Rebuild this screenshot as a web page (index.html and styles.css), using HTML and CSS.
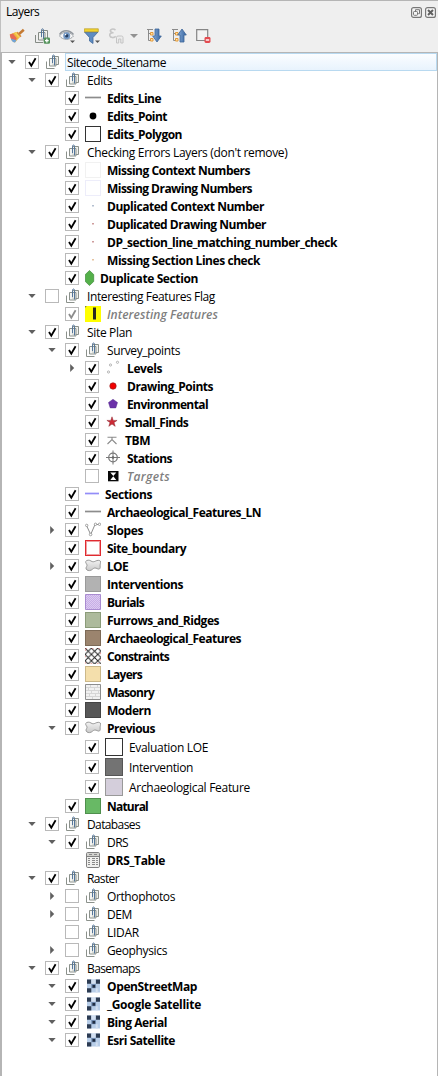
FILE: index.html
```html
<!DOCTYPE html>
<html lang="en">
<head>
<meta charset="utf-8">
<title>Layers</title>
<link rel="stylesheet" href="styles.css">
</head>
<body>
<svg class="defs" width="0" height="0" aria-hidden="true">
  <defs>
    <linearGradient id="gBlob" x2="0" y2="1"><stop offset="0" stop-color="#f2f2f2"/><stop offset="1" stop-color="#c9c9c9"/></linearGradient>
    <linearGradient id="gArrow" x2="1"><stop offset="0" stop-color="#84a9d6"/><stop offset="1" stop-color="#34639f"/></linearGradient>
    <pattern id="pDots" width="2" height="2" patternUnits="userSpaceOnUse"><rect width="2" height="2" fill="#dccaf1"/><path d="M0 0h1v1H0zM1 1h1v1H1z" fill="#c7aee6"/></pattern>
    <pattern id="pCross" width="6.400" height="6.400" patternUnits="userSpaceOnUse"><path d="M-1-1l8.400 8.400M-1 7.400L7.400-1" stroke="#222" stroke-width=".95"/></pattern>
  </defs>
  <symbol id="group" viewBox="0 0 16 16">
    <path d="M1.500 7.500v7H9.500" fill="none" stroke="#8b918b"/>
    <path d="M7.500 2.500h6v8h-6z" fill="#f0f1ed" stroke="#8b918b"/>
    <path d="M4.500 4.500h6.500v7.500H4.500z" fill="#f0f1ed" fill-opacity=".7" stroke="#8b918b"/>
    <path d="M7.500 9V2.500q0-1.500 1-1.500t1 1.500v9" fill="none" stroke="#55769a"/>
  </symbol>
  <symbol id="line" viewBox="0 0 16 16"><path d="M0 7.500h16" stroke="#8c8c8c" stroke-width="1.700"/></symbol>
  <symbol id="violet" viewBox="0 0 16 16"><path d="M0 7.500h14" stroke="#938df8" stroke-width="1.700"/></symbol>
  <symbol id="point" viewBox="0 0 16 16"><circle cx="8" cy="8" r="3.400" fill="#000"/></symbol>
  <symbol id="dotb" viewBox="0 0 16 16"><path d="M7 7h2v1.500H7z" fill="#b3bfd0"/></symbol>
  <symbol id="dotr" viewBox="0 0 16 16"><path d="M7 7h2v1.500H7z" fill="#cf9d9d"/></symbol>
  <symbol id="doto" viewBox="0 0 16 16"><path d="M7 7h2v1.500H7z" fill="#e5c3a0"/></symbol>
  <symbol id="hex" viewBox="0 0 16 16"><path d="M4.500.5L8.700 4.500v7L4.500 15.500.3 11.500v-7z" fill="#54b04a" stroke="#3f8b39" stroke-width=".7"/></symbol>
  <symbol id="flag" viewBox="0 0 16 16"><path d="M0 0h16v16H0z" fill="#ff0"/><path d="M0 1.200L1.500 0" stroke="#555"/><path d="M8 1.500h3v12H8z" fill="#2a2a22"/></symbol>
  <symbol id="levels" viewBox="0 0 16 16"><g fill="#fff" stroke="#999" stroke-width=".7"><circle cx="3.500" cy="12" r="1.100"/><circle cx="5.500" cy="5" r="1.100"/><circle cx="12.500" cy="2.300" r="1.100"/></g></symbol>
  <symbol id="red" viewBox="0 0 16 16"><circle cx="8" cy="8" r="3.200" fill="#f20000" stroke="#9a2020" stroke-width=".7"/></symbol>
  <symbol id="penta" viewBox="0 0 16 16"><path d="M8 3.300l4.500 3.200-1.700 5.400H5.200L3.500 6.500z" fill="#6b31a8" stroke="#57308e" stroke-width=".5"/></symbol>
  <symbol id="star" viewBox="0 0 16 16"><path d="M7 2.800l1.200 3.600h3.900L9 8.600l1.200 3.700L7 10.100l-3.200 2.200L5 8.600 1.900 6.400h3.900z" fill="#cc2b36" stroke="#8d2731" stroke-width=".5"/></symbol>
  <symbol id="tbm" viewBox="0 0 16 16"><path d="M2.500 5.300h9M2.500 12L7 7.500l4.500 4.500M7 5.500v2.500" fill="none" stroke="#8a8a8a" stroke-width="1.100"/></symbol>
  <symbol id="station" viewBox="0 0 16 16"><path d="M1 7.500h14M8 .5v14" stroke="#777"/><circle cx="8" cy="7.500" r="4.300" fill="none" stroke="#777" stroke-width="1.200"/><circle cx="8" cy="7.500" r="1.300" fill="#666"/></symbol>
  <symbol id="target" viewBox="0 0 16 16"><path d="M3 3h10.500v10.300H3z" fill="#080808"/><path d="M5.300 4.500h6L8.300 8zM5.300 12h6L8.300 8.300z" fill="#fff"/></symbol>
  <symbol id="slopes" viewBox="0 0 16 16"><path d="M1.500 3.500L5.700 12.500 10 2.500h4.500" fill="none" stroke="#8d8d8d"/><g fill="#fff" stroke="#8d8d8d" stroke-width=".8"><circle cx="1.700" cy="3.400" r="1.200"/><circle cx="5.600" cy="12.500" r="1.300"/><circle cx="10.500" cy="2.300" r="1.200"/><circle cx="14.500" cy="2.300" r="1.200"/></g></symbol>
  <symbol id="blob" viewBox="0 0 16 16"><path d="M.7 3.500C1.800 1.700 4.500 1.900 6 3c1.700 1.100 2.800.9 4.300.2C12.500 2.100 14.300 2 15.300 3c.7 2-.4 3.300-.2 5 .2 1.500.1 2.300-.7 3-1.500.6-2.800-1.200-4.600-1-2 .2-2.600 2.400-5.200 2.600C2.500 12.800.8 11.500 1 10c.2-1.200 1.200-1.800 1-3C1.800 5.700.4 5.200.7 3.500z" fill="url(#gBlob)" stroke="#8e8e8e" stroke-width=".9"/></symbol>
  <symbol id="hatch" viewBox="0 0 16 16"><path d="M0 0h16v16H0z" fill="#fff"/><path d="M0 0h16v16H0z" fill="url(#pCross)"/><path d="M.5.5h15v15H.5z" fill="none" stroke="#e08080" stroke-width=".7" stroke-dasharray="1.500 4.900"/></symbol>
  <symbol id="brick" viewBox="0 0 16 16"><path d="M.5.500h15v15H.5z" fill="#f1f1f1" stroke="#8d8d8d"/><path d="M1 3.500h14M1 6.500h14M1 9.500h14M1 12.500h14M5.500 1v2M12.500 1v2M3.500 4v2M9.500 4v2M6.500 7v2M13.500 7v2M4.500 10v2M10.500 10v2M7.500 13v2" stroke="#d6d6d6" fill="none"/></symbol>
  <symbol id="burial" viewBox="0 0 16 16"><path d="M.5.5h15v15H.5z" fill="url(#pDots)" stroke="#a98bd0"/></symbol>
  <symbol id="table" viewBox="0 0 16 16"><rect x="1.500" y=".5" width="13" height="15" rx="1.300" fill="#f0f0ee" stroke="#808080"/><path d="M2 1h12v3H2z" fill="#d2d2ce"/><path d="M2 4.500h12" stroke="#808080"/><path d="M3 6.500h2m2 0h3m1 0h2M3 8.500h2m2 0h3m1 0h2M3 10.500h2m2 0h3m1 0h2M3 12.500h2m2 0h3m1 0h2M4 2.500h3m2 0h3" stroke="#8a8a8a"/></symbol>
  <symbol id="raster" viewBox="0 0 16 16"><path d="M2 1.500h13v13H2z" fill="#b7cde8"/><path d="M2 1.500h4.300v4.300H2zM10.700 1.500H15v4.300h-4.300zM2 10.200h4.300v4.300H2z" fill="#2c3b52"/><path d="M6.300 5.800h4.400v4.400H6.300z" fill="#6d88ae"/><path d="M7.500 7h2.700v2.700H7.500z" fill="#202d42"/><path d="M6.300 1.500h4.400v4.300H6.300zM10.700 10.200h2v4.300h-2z" fill="#d3e0f1"/></symbol>
</svg>

<main class="panel">
  <header class="title">
    <h1 class="title-text">Layers</h1>
    <svg class="title-btn" viewBox="0 0 11 11"><rect x=".6" y=".6" width="9.800" height="9.800" rx="2" fill="#f6f6f6" stroke="#777" stroke-width="1.200"/><path d="M4.500 4V2.700h4v4H7.200" fill="none" stroke="#777"/><rect x="2.500" y="4.500" width="4" height="3.800" rx=".8" fill="none" stroke="#777"/></svg>
    <svg class="title-btn" viewBox="0 0 11 11"><rect x=".6" y=".6" width="9.800" height="9.800" rx="2" fill="#f6f6f6" stroke="#777" stroke-width="1.200"/><path d="M3 3l5 5M8 3L3 8" stroke="#606060" stroke-width="2"/></svg>
  </header>
  <nav class="toolbar">
    <svg class="tool" viewBox="0 0 16 16"><path d="M.8 6.500l6-2.500 4.200 5-5 5.500C3.500 14 1.500 12 .8 6.500z" fill="#f0b63d"/><path d="M.8 6.500L4 5.500l3.800 5L6 13C3.500 13 1.500 11 .8 6.500z" fill="#e66a55"/><path d="M1.800 10.500l5.700 1.700-1.500 2.300c-2 0-3.300-1.200-4.200-4z" fill="#6fa3d8"/><path d="M5.500 5l3-1.200 3.500 4-2.500 2z" fill="#f4d457"/><path d="M9.500 6.500l5.300-4.700" stroke="#c47a32" stroke-width="2.600"/><path d="M8 4.200l4 4.600" stroke="#d98a3d" stroke-width="1.400"/></svg>
    <svg class="tool" viewBox="0 0 16 16"><path d="M1.500 7v7.500H9" fill="none" stroke="#858b85"/><path d="M7.500 2.500h6v8h-6z" fill="#f4f5f1" stroke="#858b85"/><path d="M4.500 4.500h6.500V12H4.500z" fill="#f4f5f1" fill-opacity=".7" stroke="#858b85"/><path d="M7.500 9V2.500q0-1.700 1-1.700t1 1.700V11" fill="none" stroke="#55769a"/><rect x="9.700" y="9.500" width="6.300" height="6.300" rx="1.300" fill="#55935c"/><path d="M12.850 10.800v3.700M11 12.650h3.700" stroke="#fff" stroke-width="1.300"/></svg>
    <svg class="tool" viewBox="0 0 16 16"><path d="M.5 8C3 3.500 10 2.700 14.500 8 11 12.500 4 12.500.5 8z" fill="#f7f7f7" stroke="#a1a6ab"/><path d="M.5 6.500C3.500 1.500 10.500 1.500 14.500 6.500" fill="none" stroke="#90969c" stroke-width="1.300"/><circle cx="7.700" cy="7.800" r="3.500" fill="#7499c5"/><circle cx="7.700" cy="7.700" r="1.700" fill="#283f61"/><circle cx="6.600" cy="6.600" r=".8" fill="#fff"/><path d="M11 12.500h5L13.500 15z" fill="#555"/></svg>
    <svg class="tool" viewBox="0 0 16 16"><path d="M.5 4h13.500L9 9.500v6L5.500 13V9.500z" fill="#5e8cc2" stroke="#41699c" stroke-width=".8"/><path d="M.3.800h14v3H.3z" fill="#f1d32e" stroke="#b79b22" stroke-width=".7"/><path d="M11 12.500h5L13.500 15z" fill="#555"/></svg>
    <svg class="tool" viewBox="0 0 16 16"><path d="M6.500 2C4 .2.900 1.300 1.500 3.300 1.800 4.500 3 4.800 4.500 4.700 2 4.500.5 5.800.8 7.500c.6 2.700 4.200 2.500 6 .9" fill="none" stroke="#c6c6c6" stroke-width="1.600"/><path d="M7.500 15V9.500q0-1.500 1.500-1.500h3.500Q14 8 14 9.500V15h-2.200v-4H9.700v4z" fill="#ececec" stroke="#c4c4c4"/></svg>
    <svg class="tool-caret" viewBox="0 0 8 4"><path d="M0 0h8L4 4z" fill="#929292"/></svg>
    <svg class="tool" viewBox="0 0 16 16"><path d="M2.500 2v10.500H4M2.500 5.500H4M1 1.500h6" fill="none" stroke="#8a8a8a"/><path d="M4.500 4.500h2.500v2.500H4.500zM4.500 10.500h2.500V13H4.500z" fill="#ffe2ad" stroke="#e39a39"/><path d="M9 1h4v7h2.300L11 14 6.700 8H9z" fill="url(#gArrow)" stroke="#3d6498" stroke-width=".8"/></svg>
    <svg class="tool" viewBox="0 0 16 16"><path d="M2.500 2v10.500H4M2.500 5.500H4M1 1.500h6" fill="none" stroke="#8a8a8a"/><path d="M4.500 4.500h2.500v2.500H4.500zM4.500 10.500h2.500V13H4.500z" fill="#ffe2ad" stroke="#e39a39"/><path d="M9 14V7H6.700L11 1l4.300 6H13v7z" fill="url(#gArrow)" stroke="#3d6498" stroke-width=".8"/></svg>
    <svg class="tool" viewBox="0 0 16 16"><path d="M.7 1.700h11v10.800H.7z" fill="#f3f3f3" stroke="#858585" stroke-width="1.200"/><rect x="8.500" y="9" width="6" height="6" rx="1.400" fill="#e34b50"/><path d="M9.800 12h3.400" stroke="#fff" stroke-width="1.400"/></svg>
  </nav>
  <section class="tree" id="tree"></section>
</main>
<script src="tree.js"></script>
</body>
</html>
```

FILE: styles.css
```css
* { box-sizing: border-box; }
body {
  margin: 0;
  background: #efefef;
  font: 12px/18px "Open Sans", "Noto Sans", sans-serif;
  color: #000;
}
.defs { position: absolute; }
.panel {
  display: flex;
  flex-direction: column;
  height: 1076px;
  border-top: 1px solid #b5b5b5;
  background: #efefef;
}
.title {
  display: flex;
  align-items: center;
  height: 22px;
  padding: 0 2px 0 5px;
  border-left: 1px solid #c0c0c0;
  gap: 3px;
}
.title-text { flex: 1; margin: 0; font-size: 12px; font-weight: 400; letter-spacing: -0.5px; }
.title-btn { width: 11px; height: 11px; }
.toolbar {
  display: flex;
  align-items: center;
  gap: 9px;
  height: 29px;
  padding: 0 0 3px 8px;
  border-left: 1px solid #c0c0c0;
}
.tool { width: 16px; height: 16px; }
.tool-caret { width: 8px; height: 4px; margin: 0 -1px 0 -4px; }
.tree {
  flex: 1;
  border: solid #b5b5b5;
  border-width: 1px 1px 0 2px;
  background: #fff;
}
.row { display: flex; align-items: center; height: 18px; }
.row.tall { height: 20px; }
.d0 { padding-left: 5px; }
.d1 { padding-left: 25px; }
.d2 { padding-left: 45px; }
.d3 { padding-left: 65px; }
.twist { display: flex; justify-content: center; width: 10px; margin-right: 8px; }
.twist svg { display: block; width: 8px; height: 8px; }
.check {
  width: 14px;
  height: 14px;
  border: 1px solid #b9b9b9;
  background: #fff;
}
.check svg { display: block; width: 12px; height: 12px; }
.nocheck { width: 14px; }
.icon { display: block; width: 16px; height: 16px; margin: 0 6px; flex: none; }
.group .icon { margin: 0 6px 1px; }
.tall .icon { width: 18px; height: 18px; }
.swatch { border: 1px solid; }
.label { flex: 1; height: 18px; line-height: 20px; white-space: nowrap; }
.bold .label { font-weight: 700; }
.off .label { font-weight: 600; font-style: italic; color: #808080; }
.selected .label {
  margin-left: -2px;
  padding-left: 1px;
  line-height: 18px;
  border: 1px solid #b8d9f0;
  background: linear-gradient(#fbfdff, #e8f3fd);
}
.near6 .label { margin-left: -7px; }
.near2 .label { margin-left: -2px; }
.black { border-color: #333; background: #fff; }
.faint1 { border-color: #f1f1f1; background: #fff; }
.faint2 { border-color: #ededfa; background: #fff; }
.redbox { border-color: #e02a30; background: #fff; box-shadow: inset 0 0 0 1px #f0a0a2; }
.gray { border-color: #9a9a9a; background: #b2b2b2; }
.green { border-color: #8b9c79; background: #adba9c; }
.brown { border-color: #7d6a57; background: #9b846e; }
.sand { border-color: #cbb88a; background: #f4dfac; }
.dark { border-color: #444; background: #575757; }
.mid { border-color: #555; background: #737373; }
.lilac { border-color: #999; background: #d4cedb; }
.natural { border-color: #4f8f4d; background: #68b965; }
```

FILE: tree.js
```js
// depth, twist (v = open, > = closed), check (1 on, 0 off, g greyed, - none), icon, label, label width, classes
const rows = [
  [0, "v", 1, "group", "Sitecode_Sitename", 99, "group selected"],
  [1, "v", 1, "group", "Edits", 25, "group"],
  [2, "", 1, "line", "Edits_Line", 54, "bold"],
  [2, "", 1, "point", "Edits_Point", 60, "bold"],
  [2, "", 1, ".black", "Edits_Polygon", 75, "bold"],
  [1, "v", 1, "group", "Checking Errors Layers (don't remove)", 200.5, "group"],
  [2, "", 1, ".faint1", "Missing Context Numbers", 143, "bold"],
  [2, "", 1, ".faint2", "Missing Drawing Numbers", 145, "bold"],
  [2, "", 1, "dotb", "Duplicated Context Number", 157, "bold"],
  [2, "", 1, "dotr", "Duplicated Drawing Number", 159, "bold"],
  [2, "", 1, "dotr", "DP_section_line_matching_number_check", 230, "bold"],
  [2, "", 1, "doto", "Missing Section Lines check", 153, "bold"],
  [2, "", 1, "hex", "Duplicate Section", 98, "bold near6"],
  [1, "v", 0, "group", "Interesting Features Flag", 128, "group"],
  [2, "", "g", "flag", "Interesting Features", 111, "off"],
  [1, "v", 1, "group", "Site Plan", 45, "group"],
  [2, "v", 1, "group", "Survey_points", 73, "group"],
  [3, ">", 1, "levels", "Levels", 35, "bold"],
  [3, "", 1, "red", "Drawing_Points", 86, "bold"],
  [3, "", 1, "penta", "Environmental", 81, "bold"],
  [3, "", 1, "star", "Small_Finds", 63, "bold near2"],
  [3, "", 1, "tbm", "TBM", 25, "bold near2"],
  [3, "", 1, "station", "Stations", 45, "bold"],
  [3, "", 0, "target", "Targets", 43, "off"],
  [2, "", 1, "violet", "Sections", 47, "bold near2"],
  [2, "", 1, "line", "Archaeological_Features_LN", 154, "bold"],
  [2, ">", 1, "slopes", "Slopes", 36, "bold"],
  [2, "", 1, ".redbox", "Site_boundary", 79, "bold"],
  [2, ">", 1, "blob", "LOE", 21, "bold"],
  [2, "", 1, ".gray", "Interventions", 76, "bold"],
  [2, "", 1, "burial", "Burials", 37, "bold"],
  [2, "", 1, ".green", "Furrows_and_Ridges", 112, "bold"],
  [2, "", 1, ".brown", "Archaeological_Features", 134, "bold"],
  [2, "", 1, "hatch", "Constraints", 62, "bold"],
  [2, "", 1, ".sand", "Layers", 35, "bold"],
  [2, "", 1, "brick", "Masonry", 47, "bold"],
  [2, "", 1, ".dark", "Modern", 44, "bold"],
  [2, "v", 1, "blob", "Previous", 48, "bold"],
  [3, "", 1, ".black", "Evaluation LOE", 79, "tall"],
  [3, "", 1, ".mid", "Intervention", 64, "tall"],
  [3, "", 1, ".lilac", "Archaeological Feature", 121, "tall"],
  [2, "", 1, ".natural", "Natural", 41, "bold"],
  [1, "v", 1, "group", "Databases", 53, "group"],
  [2, "v", 1, "group", "DRS", 21, "group"],
  [2, "", "-", "table", "DRS_Table", 58, "bold"],
  [1, "v", 1, "group", "Raster", 32, "group"],
  [2, ">", 0, "group", "Orthophotos", 68, "group"],
  [2, ">", 0, "group", "DEM", 25, "group"],
  [2, "", 0, "group", "LIDAR", 32, "group"],
  [2, ">", 0, "group", "Geophysics", 60, "group"],
  [1, "v", 1, "group", "Basemaps", 53, "group"],
  [2, "v", 1, "raster", "OpenStreetMap", 90, "bold"],
  [2, "v", 1, "raster", "_Google Satellite", 94, "bold"],
  [2, "v", 1, "raster", "Bing Aerial", 60, "bold"],
  [2, "v", 1, "raster", "Esri Satellite", 68, "bold"],
];

const twists = {
  "v": '<svg viewBox="0 0 8 8"><path d="M.3 2h7.400L4 6z" fill="#606060"/></svg>',
  ">": '<svg viewBox="0 0 8 8"><path d="M2.200 0v8l4-4z" fill="#606060"/></svg>',
  "": "",
};

function checkbox(state) {
  if (state === "-") return '<span class="nocheck"></span>';
  const color = state === "g" ? "#8c8c8c" : "#000";
  const tick = state
    ? `<svg viewBox="0 0 12 12"><path d="M3 6L5.300 9.800 9.600 2.300" fill="none" stroke="${color}" stroke-width="1.800"/></svg>`
    : "";
  return `<span class="check">${tick}</span>`;
}

function icon(name) {
  return name[0] === "."
    ? `<span class="icon swatch ${name.slice(1)}"></span>`
    : `<svg class="icon"><use href="#${name}"/></svg>`;
}

const tree = document.getElementById("tree");
tree.innerHTML = rows.map(([depth, twist, check, ico, text, , cls]) =>
  `<div class="row d${depth} ${cls}"><span class="twist">${twists[twist]}</span>${checkbox(check)}${icon(ico)}<span class="label"><span class="text">${text}</span></span></div>`
).join("");

tree.querySelectorAll(".text").forEach((el, i) => {
  const [, , , , text, width] = rows[i];
  const natural = el.getBoundingClientRect().width;
  el.style.letterSpacing = (width - natural) / text.length + "px";
});
```
